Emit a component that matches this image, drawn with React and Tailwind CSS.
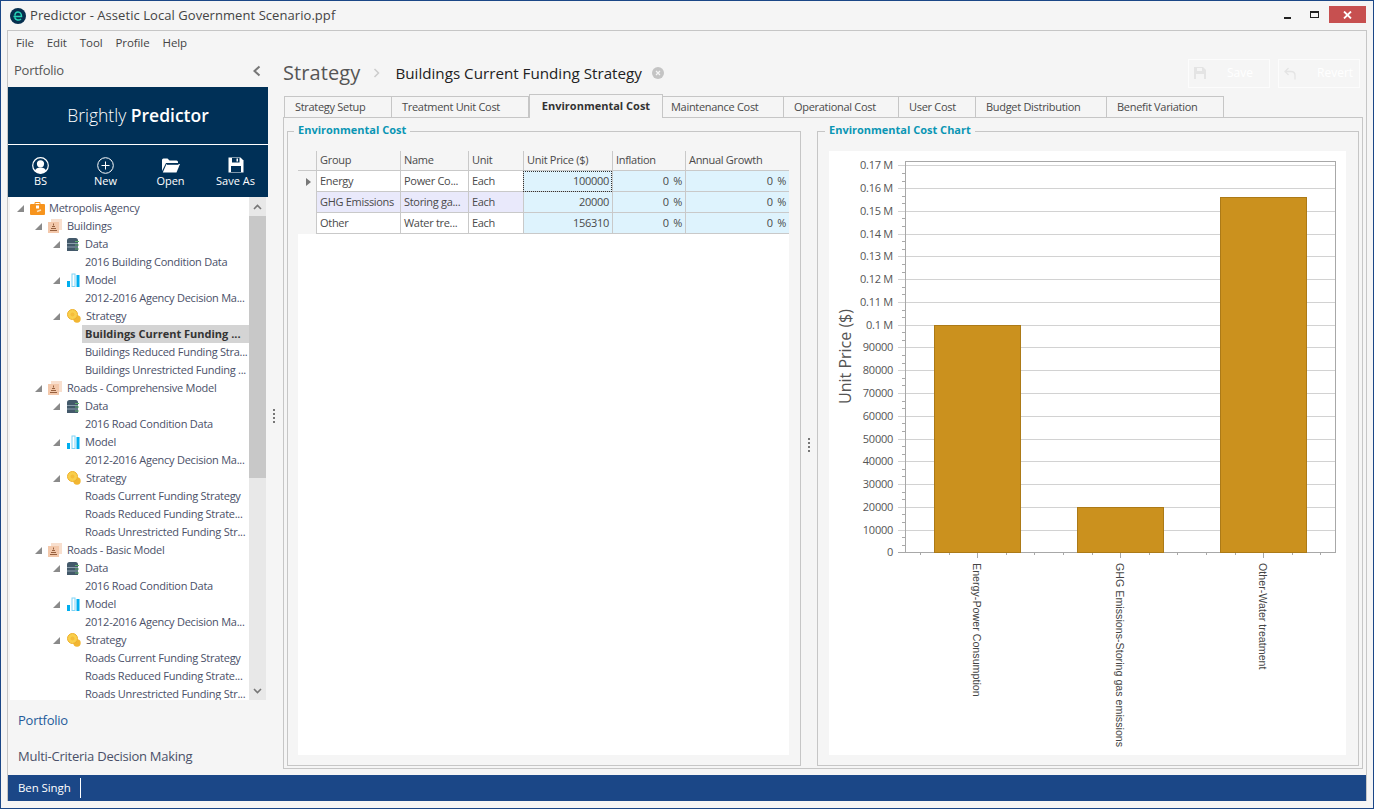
import React from 'react';

const treeRows = [
  { level: 0, label: 'Metropolis Agency', icon: 'agency' },
  { level: 1, label: 'Buildings', icon: 'portfolio' },
  { level: 2, label: 'Data', icon: 'data' },
  { level: 3, label: '2016 Building Condition Data' },
  { level: 2, label: 'Model', icon: 'model' },
  { level: 3, label: '2012-2016 Agency Decision Ma...' },
  { level: 2, label: 'Strategy', icon: 'strategy' },
  { level: 3, label: 'Buildings Current Funding ...', selected: true },
  { level: 3, label: 'Buildings Reduced Funding Stra...' },
  { level: 3, label: 'Buildings Unrestricted Funding ...' },
  { level: 1, label: 'Roads - Comprehensive Model', icon: 'portfolio' },
  { level: 2, label: 'Data', icon: 'data' },
  { level: 3, label: '2016 Road Condition Data' },
  { level: 2, label: 'Model', icon: 'model' },
  { level: 3, label: '2012-2016 Agency Decision Ma...' },
  { level: 2, label: 'Strategy', icon: 'strategy' },
  { level: 3, label: 'Roads Current Funding Strategy' },
  { level: 3, label: 'Roads Reduced Funding Strate...' },
  { level: 3, label: 'Roads Unrestricted Funding Str...' },
  { level: 1, label: 'Roads - Basic Model', icon: 'portfolio' },
  { level: 2, label: 'Data', icon: 'data' },
  { level: 3, label: '2016 Road Condition Data' },
  { level: 2, label: 'Model', icon: 'model' },
  { level: 3, label: '2012-2016 Agency Decision Ma...' },
  { level: 2, label: 'Strategy', icon: 'strategy' },
  { level: 3, label: 'Roads Current Funding Strategy' },
  { level: 3, label: 'Roads Reduced Funding Strate...' },
  { level: 3, label: 'Roads Unrestricted Funding Str...' },
];

const tabs = [
  { label: 'Strategy Setup', width: 'w-[108px]', pad: 'pl-[10px]' },
  { label: 'Treatment Unit Cost', width: 'w-[137px]', pad: 'pl-[10px]' },
  { label: 'Environmental Cost', width: 'w-[134px]', active: true },
  { label: 'Maintenance Cost', width: 'w-[121px]', pad: 'pl-[8px]' },
  { label: 'Operational Cost', width: 'w-[115px]', pad: 'pl-[10px]' },
  { label: 'User Cost', width: 'w-[77px]', pad: 'pl-[10px]' },
  { label: 'Budget Distribution', width: 'w-[131px]', pad: 'pl-[10px]' },
  { label: 'Benefit Variation', width: 'w-[117px]', pad: 'pl-[10px]' },
];

const costs = [
  { group: 'Energy', name: 'Power Co...', price: '100000', current: true },
  { group: 'GHG Emissions', name: 'Storing ga...', price: '20000', alt: true },
  { group: 'Other', name: 'Water tre...', price: '156310' },
];

function TreeIcon({ type }) {
  if (type === 'agency') {
    return (
      <svg width="15" height="13" viewBox="0 0 15 13" className="shrink-0">
        <path d="M5 2V0.5h5V2" fill="none" stroke="#f7941d" />
        <rect y="2" width="15" height="11" rx="1" fill="#f7941d" />
        <rect x="6" y="3.5" width="3" height="3" fill="#fff" />
        <path d="M7 9.5l4-1.5" stroke="#fde0b8" strokeWidth="1.5" />
      </svg>
    );
  }
  if (type === 'portfolio') {
    return (
      <svg width="14" height="14" viewBox="0 0 14 14" className="shrink-0">
        <rect x="3" y="0" width="11" height="11" fill="#f8dfce" />
        <rect x="0" y="3" width="11" height="11" fill="#f3c8ab" />
        <path d="M2 11.5h7M3 9.5h5M4 7.5h3" stroke="#96603e" />
        <path d="M5.5 4.5v2" stroke="#96603e" />
      </svg>
    );
  }
  if (type === 'data') {
    return (
      <svg width="13" height="13" viewBox="0 0 13 13" className="shrink-0">
        <path d="M0 2.5Q0 0 2.5 0h6Q11 0 11 2.5V13H0z" fill="#43596a" />
        <path d="M0 5.5h11M0 9h11" stroke="#8da0ad" />
        <path d="M8 3.5h4M8 7h4M8 11h4" stroke="#5fae6b" />
      </svg>
    );
  }
  if (type === 'model') {
    return (
      <svg width="13" height="14" viewBox="0 0 13 14" className="shrink-0">
        <rect x="0" y="8" width="3" height="6" fill="#00aeef" />
        <rect x="5" y="1" width="3" height="12.5" fill="none" stroke="#7fd3f5" strokeWidth="1" />
        <rect x="9.5" y="2" width="3" height="12" fill="#00aeef" />
      </svg>
    );
  }
  return (
    <svg width="14" height="14" viewBox="0 0 14 14" className="shrink-0">
      <circle cx="10" cy="10" r="3.7" fill="#f2b632" />
      <circle cx="5.5" cy="5.5" r="5" fill="#f9cf4c" stroke="#eeb02c" />
      <circle cx="5.5" cy="5.5" r="2" fill="#f5bd3a" />
    </svg>
  );
}

function TreeRow({ row }) {
  if (row.level === 3) {
    return (
      <div className="flex h-[18px] items-center pl-[72px]">
        <span className={`flex h-[18px] w-[167px] items-center whitespace-nowrap px-[3px] ${row.selected ? 'bg-[#d4d4d4] font-bold tracking-normal text-[#333]' : ''}`}>
          {row.label}
        </span>
      </div>
    );
  }
  const wrap = { 0: 'pl-[7px] gap-[6px]', 1: 'pl-[25px] gap-[6px]', 2: 'pl-[43px] gap-[7px]' }[row.level];
  const textGap = { 0: 'ml-[4px]', 1: 'ml-[5px]', 2: 'ml-[5px]' }[row.level];
  return (
    <div className={`flex h-[18px] items-center ${wrap}`}>
      <svg width="7" height="7" viewBox="0 0 7 7" className="shrink-0"><polygon points="7,0 7,7 0,7" fill="#8a8a8a" /></svg>
      <div className="flex items-center">
        <TreeIcon type={row.icon} />
        <span className={`whitespace-nowrap ${textGap}`}>{row.label}</span>
      </div>
    </div>
  );
}

function ToolButton({ label, children }) {
  return (
    <div className="flex flex-col items-center pt-[11px] text-[11px] leading-[14px] text-white">
      <div className="flex h-[18px] items-center justify-center">{children}</div>
      <span>{label}</span>
    </div>
  );
}

function Sidebar() {
  return (
    <div className="flex w-[260px] shrink-0 flex-col">
      <div className="flex h-[31px] shrink-0 items-center justify-between pb-[2px] pl-[6px] pr-[6px] text-[13px] tracking-[-0.25px] text-[#555]">
        <span>Portfolio</span>
        <svg width="10" height="12" viewBox="0 0 10 12"><path d="M7.5 1.5L2.5 6l5 4.5" fill="none" stroke="#777" strokeWidth="2" /></svg>
      </div>
      <div className="flex h-[57px] shrink-0 items-center justify-center bg-[#003057] text-[17.5px] text-white">
        <span className="font-light">Brightly&nbsp;</span>
        <span className="font-semibold">Predictor</span>
      </div>
      <div className="h-px shrink-0 bg-white" />
      <div className="grid h-[52px] shrink-0 grid-cols-4 bg-[#003057]">
        <ToolButton label="BS">
          <svg width="17" height="17" viewBox="0 0 17 17">
            <circle cx="8.5" cy="8.5" r="7.8" fill="none" stroke="#fff" strokeWidth="1.2" />
            <circle cx="8.5" cy="6.8" r="3.6" fill="#fff" />
            <path d="M2.8 14c1-3 3-3.6 5.7-3.6s4.7.6 5.7 3.6A7.8 7.8 0 0 1 2.8 14z" fill="#fff" />
          </svg>
        </ToolButton>
        <ToolButton label="New">
          <svg width="17" height="17" viewBox="0 0 17 17">
            <circle cx="8.5" cy="8.5" r="7.8" fill="none" stroke="#fff" strokeWidth="1" />
            <path d="M8.5 4.5v8M4.5 8.5h8" stroke="#fff" strokeWidth="1" />
          </svg>
        </ToolButton>
        <ToolButton label="Open">
          <svg width="18" height="15" viewBox="0 0 18 15">
            <path d="M0 2Q0 0.5 1.5 0.5h4l2 2h7Q16 2.5 16 4v1H4L0 13z" fill="#fff" />
            <path d="M4.5 6H18l-3.5 8.5H0.8z" fill="#fff" />
            <path d="M4.8 6.5H16.5" stroke="#003057" strokeWidth="0.8" />
          </svg>
        </ToolButton>
        <ToolButton label="Save As">
          <svg width="16" height="16" viewBox="0 0 16 16">
            <path d="M0.5 0.5h12l3 3v12H0.5z" fill="#fff" />
            <rect x="4" y="1" width="7.5" height="4.5" fill="#003057" />
            <rect x="8.5" y="1.5" width="1.5" height="3" fill="#fff" />
            <rect x="3" y="9" width="10" height="6" fill="#003057" />
          </svg>
        </ToolButton>
      </div>
      <div className="flex min-h-0 flex-1">
        <div className="ml-[2px] w-[239px] overflow-hidden bg-white pt-[2px] text-[11px] tracking-[-0.25px] text-[#4a5068]">
          {treeRows.map((row, i) => <TreeRow key={i} row={row} />)}
        </div>
        <div className="flex w-[17px] flex-col bg-[#e8e8e8]">
          <div className="flex h-[19px] items-center justify-center">
            <svg width="9" height="6" viewBox="0 0 9 6"><path d="M1 5l3.5-3.5L8 5" fill="none" stroke="#777" strokeWidth="1.6" /></svg>
          </div>
          <div className="h-[262px] bg-[#c8c8c8]" />
          <div className="mt-auto flex h-[19px] items-center justify-center">
            <svg width="9" height="6" viewBox="0 0 9 6"><path d="M1 1l3.5 3.5L8 1" fill="none" stroke="#777" strokeWidth="1.6" /></svg>
          </div>
        </div>
      </div>
      <div className="flex h-[75px] shrink-0 flex-col pl-[10px] pt-[3px] text-[13px] tracking-[-0.25px]">
        <div className="flex h-[36px] items-center text-[#245a9a]">Portfolio</div>
        <div className="flex h-[36px] items-center text-[#4a5068]">Multi-Criteria Decision Making</div>
      </div>
    </div>
  );
}

function Splitter() {
  return (
    <div className="flex flex-col gap-[2px]">
      <div className="h-[2px] w-[2px] bg-[#777]" />
      <div className="h-[2px] w-[2px] bg-[#777]" />
      <div className="h-[2px] w-[2px] bg-[#777]" />
      <div className="h-[2px] w-[2px] bg-[#777]" />
    </div>
  );
}

function CostGrid() {
  const cols = 'grid-cols-[18px_84px_68px_55px_89px_73px_104px]';
  const head = 'flex h-[20px] items-center whitespace-nowrap border-b border-l border-[#c9c9c9] pl-[3px]';
  return (
    <div className="flex min-h-0 flex-1 flex-col text-[11px] tracking-[-0.3px] text-[#4a4a4a]">
      <div className={`grid ${cols}`}>
        <div className="h-[20px] border-b border-[#c9c9c9]" />
        <div className={head}>Group</div>
        <div className={head}>Name</div>
        <div className={head}>Unit</div>
        <div className={head}>Unit Price ($)</div>
        <div className={head}>Inflation</div>
        <div className={head}>Annual Growth</div>
        {costs.map((row) => {
          const base = `flex h-[21px] items-center whitespace-nowrap border-b border-l border-[#c9c9c9] px-[3px] ${row.alt ? 'bg-[#e9e9fb]' : 'bg-white'}`;
          const num = 'flex h-[21px] items-center justify-end border-b border-l border-[#c9c9c9] bg-[#def3fd] px-[3px] [word-spacing:2px]';
          return (
            <React.Fragment key={row.group}>
              <div className="flex h-[21px] items-center justify-center">
                {row.current && <svg width="5" height="8" viewBox="0 0 5 8" className="ml-[2px]"><polygon points="0,0 5,4 0,8" fill="#777" /></svg>}
              </div>
              <div className={base}>{row.group}</div>
              <div className={base}>{row.name}</div>
              <div className={base}>Each</div>
              <div className={`${num} ${row.current ? 'outline-1 -outline-offset-1 outline-dotted outline-[#333]' : ''}`}>{row.price}</div>
              <div className={num}>0 %</div>
              <div className={num}>0 %</div>
            </React.Fragment>
          );
        })}
      </div>
      <div className="flex-1 bg-white" />
    </div>
  );
}

function CostChart() {
  const zero = 552;
  const step = 22.76;
  const y = (v) => Math.round(zero - (v / 10000) * step + 0.3);
  const majors = Array.from({ length: 18 }, (_, i) => i);
  const minors = [];
  for (let i = 0; i < 17; i++) { minors.push(i + 1 / 3, i + 2 / 3); }
  const xTicks = Array.from({ length: 15 }, (_, i) => 920 + i * 28.6);
  const bars = [
    { x: 934.5, v: 100000, label: 'Energy-Power Consumption', cx: 977 },
    { x: 1077.5, v: 20000, label: 'GHG Emissions-Storing gas emissions', cx: 1120 },
    { x: 1220.5, v: 156310, label: 'Other-Water treatment', cx: 1263 },
  ];
  const tickLabel = (i) => (i === 0 ? '0' : i < 10 ? `${i}0000` : `0.${i === 10 ? '1' : i} M`);
  return (
    <svg width="517" height="604" viewBox="829 151 517 604" className="block bg-white">
      {majors.map((i) => (
        <g key={i}>
          <line x1="898" x2="1335" y1={y(i * 10000) + 0.5} y2={y(i * 10000) + 0.5} stroke={i === 0 ? '#a8a8a8' : '#d2d2d2'} />
          <text x="893" y={y(i * 10000) + 4} textAnchor="end" fontSize="11" letterSpacing="-0.25" fill="#555" fontFamily="'Open Sans', sans-serif">{tickLabel(i)}</text>
        </g>
      ))}
      {minors.map((m) => <line key={m} x1="902" x2="905" y1={y(m * 10000) + 0.5} y2={y(m * 10000) + 0.5} stroke="#a8a8a8" />)}
      <rect x="905.5" y="161.5" width="430" height="391" fill="none" stroke="#a8a8a8" />
      {xTicks.map((x, i) => <line key={x} x1={Math.round(x) + 0.5} x2={Math.round(x) + 0.5} y1="552" y2={i % 5 === 2 ? 558 : 555} stroke="#a8a8a8" />)}
      {bars.map((b) => (
        <g key={b.label}>
          <rect x={b.x} y={y(b.v) + 0.5} width="86" height={552 - y(b.v)} fill="#cb911e" stroke="#ac7a17" />
          <text transform={`translate(${b.cx - 4} 563) rotate(90)`} fontSize="10.7" fill="#444" fontFamily="'Liberation Sans', sans-serif">{b.label}</text>
        </g>
      ))}
      <text transform="translate(851 356.5) rotate(-90)" textAnchor="middle" fontSize="16" fill="#555" fontFamily="'Open Sans', sans-serif">Unit Price ($)</text>
    </svg>
  );
}

function GroupBox({ title, width, legendOffset, children }) {
  return (
    <fieldset className={`flex min-w-0 shrink-0 flex-col border border-[#c6c6c6] ${width}`}>
      <legend className={`h-[16px] px-[4px] text-[11px] font-bold leading-[14px] text-[#0b96b4] ${legendOffset}`}>{title}</legend>
      {children}
    </fieldset>
  );
}

export default function App() {
  return (
    <div className="flex h-[809px] w-[1374px] flex-col overflow-hidden border border-[#1b4787] bg-[#f5f5f5] font-['Open_Sans',sans-serif] text-[#444]">
      <div className="flex h-[29px] shrink-0 items-center pl-[9px] pr-[7px]">
        <svg width="16" height="16" viewBox="0 0 16 16" className="shrink-0">
          <circle cx="8" cy="8" r="8" fill="#062f4f" />
          <path d="M3.5 8.5h8c0-2.5-1.5-4.5-3.5-4.5S4.8 5.5 5 7.5M11 11c-2 1.800-5.500 1.300-6.300-1.500" fill="none" stroke="#27d6b8" strokeWidth="1.5" />
        </svg>
        <span className="ml-[4px] text-[13px] tracking-[0.06px] text-[#444]">Predictor - Assetic Local Government Scenario.ppf</span>
        <div className="ml-auto mt-[-2px] flex items-center">
          <div className="mt-[6px] h-[2px] w-[7px] bg-[#222]" />
          <div className="ml-[19px] h-[7px] w-[9px] border border-t-2 border-[#222]" />
          <div className="ml-[10px] flex h-[17px] w-[37px] items-center justify-center bg-[#c75050]">
            <svg width="9" height="8" viewBox="0 0 9 8"><path d="M1 0.5l7 7M8 0.5l-7 7" stroke="#fff" strokeWidth="1.8" /></svg>
          </div>
        </div>
      </div>

      <div className="mx-[6px] flex min-h-0 flex-1 flex-col border border-b-0 border-[#c6c6c6]">
        <div className="flex h-[25px] shrink-0 items-center gap-[13px] pb-[2px] pl-[8px] text-[11.5px] tracking-[-0.1px] text-[#444]">
          <span>File</span>
          <span>Edit</span>
          <span>Tool</span>
          <span>Profile</span>
          <span>Help</span>
        </div>
        <div className="flex min-h-0 flex-1">
          <Sidebar />
          <div className="flex w-[15px] shrink-0 items-center pl-[5px]"><Splitter /></div>
          <div className="flex w-[1080px] shrink-0 flex-col pb-[6px]">
            <div className="flex h-[38px] shrink-0 items-center pb-[4px]">
              <span className="text-[20px] tracking-[0.1px] text-[#555]">Strategy</span>
              <svg width="8" height="10" viewBox="0 0 8 10" className="ml-[13px]"><path d="M1.5 1l4 4-4 4" fill="none" stroke="#ccc" strokeWidth="1.5" /></svg>
              <span className="ml-[14px] text-[15.2px] text-[#222]">Buildings Current Funding Strategy</span>
              <svg width="12" height="12" viewBox="0 0 12 12" className="ml-[10px]">
                <circle cx="6" cy="6" r="6" fill="#c4c4c4" />
                <path d="M4 4l4 4M8 4l-4 4" stroke="#f5f5f5" strokeWidth="1.2" />
              </svg>
              <div className="ml-auto flex gap-[8px] pr-[3px] text-[12px] text-white">
                <div className="flex h-[29px] w-[82px] items-center border border-[#fcfcfc] pl-[5px]">
                  <svg width="12" height="12" viewBox="0 0 12 12"><path d="M0 0h9l3 3v9H0z" fill="#e4e4e4" /><rect x="3" y="1" width="5" height="3" fill="#f5f5f5" /><rect x="2" y="7" width="8" height="5" fill="#f5f5f5" /></svg>
                  <span className="ml-[21px]">Save</span>
                </div>
                <div className="flex h-[29px] w-[82px] items-center border border-[#fcfcfc] pl-[5px]">
                  <svg width="12" height="13" viewBox="0 0 12 13"><path d="M4.5 1L1 4.5 4.5 8M1 4.5h6c2.5 0 4 1.500 4 4v4" fill="none" stroke="#e4e4e4" strokeWidth="1.3" /></svg>
                  <span className="ml-[21px]">Revert</span>
                </div>
              </div>
            </div>
            <div className="flex h-[23px] shrink-0 items-end pl-px text-[11px] text-[#4a4a4a]">
              {tabs.map((tab) => (
                <div
                  key={tab.label}
                  className={tab.active
                    ? `relative z-10 -mb-px flex h-[24px] shrink-0 items-center justify-center border border-b-0 border-[#c6c6c6] bg-[#f5f5f5] font-bold text-[#333] ${tab.width}`
                    : `flex h-[21px] shrink-0 items-center border border-b-0 border-l-0 border-[#c6c6c6] tracking-[-0.3px] first:border-l ${tab.pad} ${tab.width}`}
                >
                  {tab.label}
                </div>
              ))}
            </div>
            <div className="flex min-h-0 flex-1 border border-[#c6c6c6] pb-[2px] pl-[3px] pr-[3px] pt-[5px]">
              <GroupBox title="Environmental Cost" width="w-[514px]" legendOffset="ml-[6px]">
                <div className="flex min-h-0 flex-1 flex-col pb-[10px] pl-[10px] pr-[11px] pt-[12px]">
                  <CostGrid />
                </div>
              </GroupBox>
              <div className="flex w-[16px] shrink-0 items-center justify-center"><Splitter /></div>
              <GroupBox title="Environmental Cost Chart" width="w-[542px]" legendOffset="ml-[7px]">
                <div className="flex min-h-0 flex-1 flex-col pb-[10px] pl-[11px] pr-[12px] pt-[12px]">
                  <CostChart />
                </div>
              </GroupBox>
            </div>
          </div>
        </div>
        <div className="flex h-[26px] shrink-0 items-center bg-[#1b4787] pl-[10px] text-[11.5px] tracking-[-0.1px] text-white">
          <span>Ben Singh</span>
          <div className="ml-[9px] h-[20px] w-px bg-white" />
        </div>
      </div>
      <div className="h-[7px] shrink-0" />
    </div>
  );
}
